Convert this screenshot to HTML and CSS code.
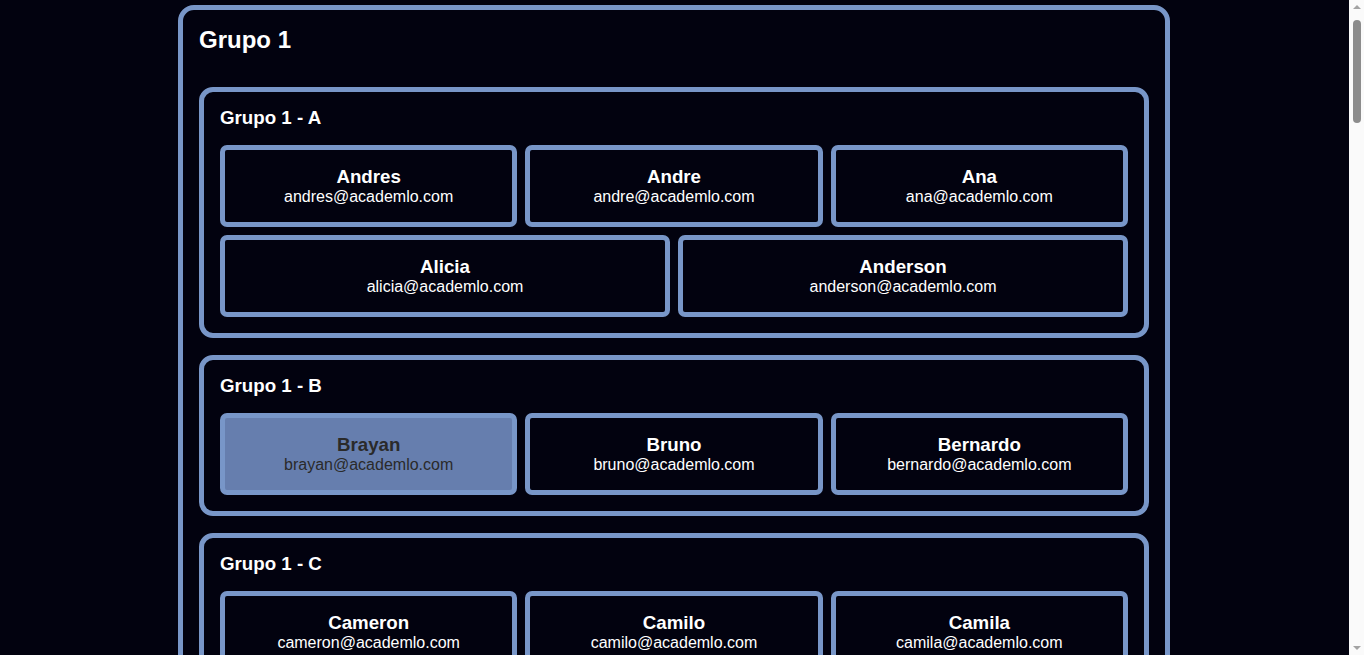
FILE: index.html
```html
<!DOCTYPE html>
<html lang="es">
<head>
<meta charset="utf-8">
<title>Grupos</title>
<link rel="stylesheet" href="styles.css">
</head>
<body>
<main class="page">
  <section class="group">
    <h2 class="group-title">Grupo 1</h2>
    <div class="subgroup">
      <h3 class="subgroup-title">Grupo 1 - A</h3>
      <div class="cards">
        <div class="card"><div class="card-name">Andres</div><div class="card-email">andres@academlo.com</div></div>
        <div class="card"><div class="card-name">Andre</div><div class="card-email">andre@academlo.com</div></div>
        <div class="card"><div class="card-name">Ana</div><div class="card-email">ana@academlo.com</div></div>
        <div class="card"><div class="card-name">Alicia</div><div class="card-email">alicia@academlo.com</div></div>
        <div class="card"><div class="card-name">Anderson</div><div class="card-email">anderson@academlo.com</div></div>
      </div>
    </div>
    <div class="subgroup">
      <h3 class="subgroup-title">Grupo 1 - B</h3>
      <div class="cards">
        <div class="card card-active"><div class="card-name">Brayan</div><div class="card-email">brayan@academlo.com</div></div>
        <div class="card"><div class="card-name">Bruno</div><div class="card-email">bruno@academlo.com</div></div>
        <div class="card"><div class="card-name">Bernardo</div><div class="card-email">bernardo@academlo.com</div></div>
      </div>
    </div>
    <div class="subgroup">
      <h3 class="subgroup-title">Grupo 1 - C</h3>
      <div class="cards">
        <div class="card"><div class="card-name">Cameron</div><div class="card-email">cameron@academlo.com</div></div>
        <div class="card"><div class="card-name">Camilo</div><div class="card-email">camilo@academlo.com</div></div>
        <div class="card"><div class="card-name">Camila</div><div class="card-email">camila@academlo.com</div></div>
        <div class="card"><div class="card-name">Carlos</div><div class="card-email">carlos@academlo.com</div></div>
      </div>
    </div>
  </section>

  <section class="group">
    <h2 class="group-title">Grupo 2</h2>
    <div class="subgroup">
      <h3 class="subgroup-title">Grupo 2 - A</h3>
      <div class="cards">
        <div class="card"><div class="card-name">Daniel</div><div class="card-email">daniel@academlo.com</div></div>
        <div class="card"><div class="card-name">David</div><div class="card-email">david@academlo.com</div></div>
        <div class="card"><div class="card-name">Diana</div><div class="card-email">diana@academlo.com</div></div>
        <div class="card"><div class="card-name">Diego</div><div class="card-email">diego@academlo.com</div></div>
      </div>
    </div>
    <div class="subgroup">
      <h3 class="subgroup-title">Grupo 2 - B</h3>
      <div class="cards">
        <div class="card"><div class="card-name">Elena</div><div class="card-email">elena@academlo.com</div></div>
        <div class="card"><div class="card-name">Emilio</div><div class="card-email">emilio@academlo.com</div></div>
        <div class="card"><div class="card-name">Esteban</div><div class="card-email">esteban@academlo.com</div></div>
      </div>
    </div>
    <div class="subgroup">
      <h3 class="subgroup-title">Grupo 2 - C</h3>
      <div class="cards">
        <div class="card"><div class="card-name">Fernando</div><div class="card-email">fernando@academlo.com</div></div>
        <div class="card"><div class="card-name">Fabiola</div><div class="card-email">fabiola@academlo.com</div></div>
        <div class="card"><div class="card-name">Felipe</div><div class="card-email">felipe@academlo.com</div></div>
        <div class="card"><div class="card-name">Flor</div><div class="card-email">flor@academlo.com</div></div>
        <div class="card"><div class="card-name">Franco</div><div class="card-email">franco@academlo.com</div></div>
      </div>
    </div>
  </section>

  <section class="group">
    <h2 class="group-title">Grupo 3</h2>
    <div class="subgroup">
      <h3 class="subgroup-title">Grupo 3 - A</h3>
      <div class="cards">
        <div class="card"><div class="card-name">Gabriel</div><div class="card-email">gabriel@academlo.com</div></div>
        <div class="card"><div class="card-name">Gloria</div><div class="card-email">gloria@academlo.com</div></div>
        <div class="card"><div class="card-name">Gustavo</div><div class="card-email">gustavo@academlo.com</div></div>
      </div>
    </div>
    <div class="subgroup">
      <h3 class="subgroup-title">Grupo 3 - B</h3>
      <div class="cards">
        <div class="card"><div class="card-name">Hector</div><div class="card-email">hector@academlo.com</div></div>
        <div class="card"><div class="card-name">Helena</div><div class="card-email">helena@academlo.com</div></div>
        <div class="card"><div class="card-name">Hugo</div><div class="card-email">hugo@academlo.com</div></div>
        <div class="card"><div class="card-name">Horacio</div><div class="card-email">horacio@academlo.com</div></div>
      </div>
    </div>
    <div class="subgroup">
      <h3 class="subgroup-title">Grupo 3 - C</h3>
      <div class="cards">
        <div class="card"><div class="card-name">Ivan</div><div class="card-email">ivan@academlo.com</div></div>
        <div class="card"><div class="card-name">Isabel</div><div class="card-email">isabel@academlo.com</div></div>
        <div class="card"><div class="card-name">Ignacio</div><div class="card-email">ignacio@academlo.com</div></div>
      </div>
    </div>
  </section>

  <section class="group">
    <h2 class="group-title">Grupo 4</h2>
    <div class="subgroup">
      <h3 class="subgroup-title">Grupo 4 - A</h3>
      <div class="cards">
        <div class="card"><div class="card-name">Javier</div><div class="card-email">javier@academlo.com</div></div>
        <div class="card"><div class="card-name">Julia</div><div class="card-email">julia@academlo.com</div></div>
        <div class="card"><div class="card-name">Jorge</div><div class="card-email">jorge@academlo.com</div></div>
        <div class="card"><div class="card-name">Juana</div><div class="card-email">juana@academlo.com</div></div>
      </div>
    </div>
    <div class="subgroup">
      <h3 class="subgroup-title">Grupo 4 - B</h3>
      <div class="cards">
        <div class="card"><div class="card-name">Karla</div><div class="card-email">karla@academlo.com</div></div>
        <div class="card"><div class="card-name">Kevin</div><div class="card-email">kevin@academlo.com</div></div>
        <div class="card"><div class="card-name">Karen</div><div class="card-email">karen@academlo.com</div></div>
      </div>
    </div>
    <div class="subgroup">
      <h3 class="subgroup-title">Grupo 4 - C</h3>
      <div class="cards">
        <div class="card"><div class="card-name">Laura</div><div class="card-email">laura@academlo.com</div></div>
        <div class="card"><div class="card-name">Luis</div><div class="card-email">luis@academlo.com</div></div>
        <div class="card"><div class="card-name">Lucia</div><div class="card-email">lucia@academlo.com</div></div>
        <div class="card"><div class="card-name">Lorenzo</div><div class="card-email">lorenzo@academlo.com</div></div>
        <div class="card"><div class="card-name">Leticia</div><div class="card-email">leticia@academlo.com</div></div>
      </div>
    </div>
  </section>

  <section class="group">
    <h2 class="group-title">Grupo 5</h2>
    <div class="subgroup">
      <h3 class="subgroup-title">Grupo 5 - A</h3>
      <div class="cards">
        <div class="card"><div class="card-name">Mario</div><div class="card-email">mario@academlo.com</div></div>
        <div class="card"><div class="card-name">Marta</div><div class="card-email">marta@academlo.com</div></div>
        <div class="card"><div class="card-name">Miguel</div><div class="card-email">miguel@academlo.com</div></div>
      </div>
    </div>
    <div class="subgroup">
      <h3 class="subgroup-title">Grupo 5 - B</h3>
      <div class="cards">
        <div class="card"><div class="card-name">Natalia</div><div class="card-email">natalia@academlo.com</div></div>
        <div class="card"><div class="card-name">Nicolas</div><div class="card-email">nicolas@academlo.com</div></div>
        <div class="card"><div class="card-name">Nora</div><div class="card-email">nora@academlo.com</div></div>
        <div class="card"><div class="card-name">Nestor</div><div class="card-email">nestor@academlo.com</div></div>
      </div>
    </div>
    <div class="subgroup">
      <h3 class="subgroup-title">Grupo 5 - C</h3>
      <div class="cards">
        <div class="card"><div class="card-name">Oscar</div><div class="card-email">oscar@academlo.com</div></div>
        <div class="card"><div class="card-name">Olga</div><div class="card-email">olga@academlo.com</div></div>
        <div class="card"><div class="card-name">Omar</div><div class="card-email">omar@academlo.com</div></div>
      </div>
    </div>
  </section>
</main>
<div class="scrollbar" aria-hidden="true">
  <span class="scroll-arrow scroll-arrow-up"></span>
  <span class="scroll-thumb"></span>
  <span class="scroll-arrow scroll-arrow-down"></span>
</div>
</body>
</html>
```

FILE: styles.css
```css
html, body {
  margin: 0;
  padding: 0;
  background: #02020f;
}

body {
  font-family: "Liberation Sans", Arial, sans-serif;
  color: #ffffff;
  padding-right: 16px;
}

.page {
  width: 992px;
  margin: 0 auto;
  padding: 5px 0;
  display: flex;
  flex-direction: column;
  gap: 16px;
}

.group {
  border: 5px solid #7896c8;
  border-radius: 16px;
  padding: 16px;
  display: flex;
  flex-direction: column;
  gap: 17px;
}

.group-title {
  margin: 0 0 16px 0;
  font-size: 24px;
  font-weight: bold;
  line-height: 28px;
}

.subgroup {
  border: 5px solid #7896c8;
  border-radius: 14px;
  padding: 15px 16px 16px;
  display: flex;
  flex-direction: column;
  gap: 16px;
}

.subgroup-title {
  margin: 0;
  font-size: 18.72px;
  font-weight: bold;
  line-height: 22px;
}

.cards {
  display: flex;
  flex-wrap: wrap;
  gap: 8px;
}

.card {
  flex: 1 1 260px;
  border: 5px solid #7896c8;
  border-radius: 7px;
  padding: 16px 8px;
  text-align: center;
}

.card-active {
  background: #667eae;
  color: #2a2a2a;
}

.card-name {
  font-size: 18.72px;
  font-weight: bold;
  line-height: 21px;
}

.card-email {
  font-size: 16px;
  line-height: 19px;
}

/* imitation of the browser's vertical scrollbar */
.scrollbar {
  position: fixed;
  top: 0;
  right: 0;
  bottom: 0;
  width: 15px;
  background: #fafafa;
  display: flex;
  flex-direction: column;
  align-items: center;
}

.scroll-arrow {
  width: 0;
  height: 0;
  border-left: 4px solid transparent;
  border-right: 4px solid transparent;
}

.scroll-arrow-up {
  margin-top: 5px;
  border-bottom: 4px solid #a3a3a3;
}

.scroll-thumb {
  margin-top: 11px;
  width: 8px;
  height: 103px;
  border-radius: 4px;
  background: #8c8c8c;
}

.scroll-arrow-down {
  margin-top: auto;
  margin-bottom: 5px;
  border-top: 4px solid #a3a3a3;
}
```
